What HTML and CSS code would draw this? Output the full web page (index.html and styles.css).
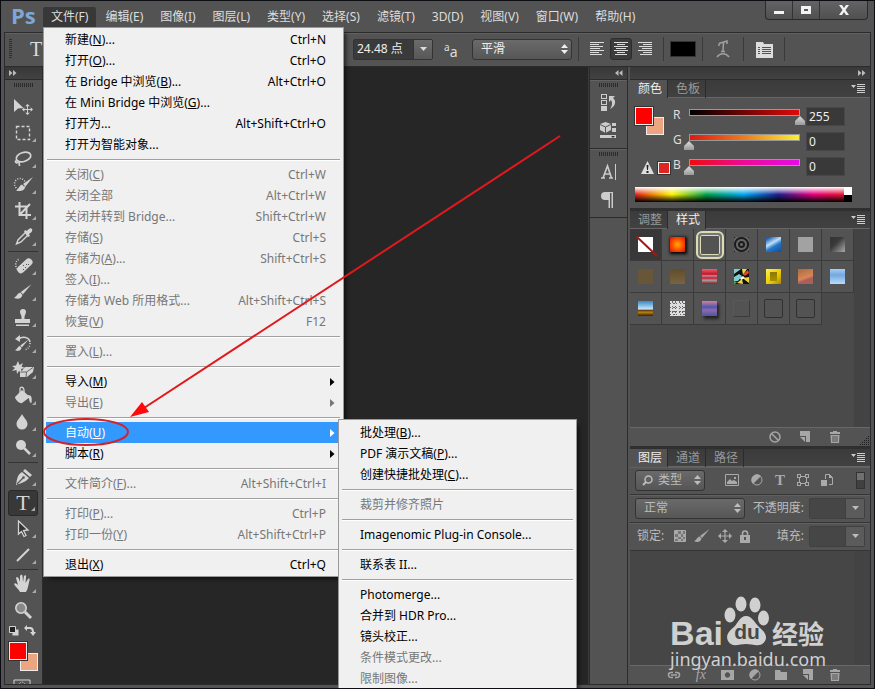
FILE: index.html
```html
<!DOCTYPE html>
<html lang="zh-CN">
<head>
<meta charset="utf-8">
<title>Ps</title>
<link rel="stylesheet" href="styles.css">
</head>
<body>
<svg class="defs" aria-hidden="true">
  <defs>
    <symbol id="i-updown" viewBox="0 0 7 10"><path d="M3.5 0 7 4H0zM3.5 10 7 6H0z"/></symbol>
    <symbol id="i-down" viewBox="0 0 7 4"><path d="M0 0h7L3.5 4z"/></symbol>
    <symbol id="i-right" viewBox="0 0 5 8"><path d="M0 0 4.500 4 0 8z"/></symbol>
    <symbol id="i-menu" viewBox="0 0 14 9"><path d="M0 1h5L2.500 4zM6 0h8v1H6zM6 2h8v1H6zM6 4h8v1H6zM6 6h8v1H6zM6 8h8v1H6z"/></symbol>
    <symbol id="i-expand" viewBox="0 0 8 6"><path d="M0 0 3.500 3 0 6zM4 0l3.500 3L4 6z"/></symbol>
    <symbol id="i-collapse" viewBox="0 0 8 6"><path d="M3.500 0 0 3l3.500 3zM7.500 0 4 3l3.500 3z"/></symbol>
    <symbol id="i-trash" viewBox="0 0 12 12"><path d="M4 0h4v1h3v2H1V1h3zM1.500 4h9L10 12H2zM3.500 5v6h1V5zm2 0v6h1V5zm2 0v6h1V5z" fill-rule="evenodd"/></symbol>
    <symbol id="i-new" viewBox="0 0 12 12"><path d="M1 0h10v11H7V5H1z"/><path d="M1 6h5v5z"/></symbol>
    <symbol id="i-half" viewBox="0 0 12 12"><circle cx="6" cy="6" r="5" fill="none" stroke="currentColor"/><path d="M10 2A5.600 5.600 0 0 0 2 10z"/></symbol>
    <symbol id="i-brush" viewBox="0 0 16 14"><path d="M15.500 0 8 9 6 7zM5.500 7.500 7.500 9.500C7 13 3 14 0 12c2 0 3-4 5.500-4.500z"/></symbol>
    <symbol id="i-cross" viewBox="0 0 14 14"><path d="M7 0l3 3H7.600v3.400H11V4l3 3-3 3V7.600H7.600V11H10l-3 3-3-3h2.400V7.600H3V10L0 7l3-3v2.400h3.400V3H4z"/></symbol>
  </defs>
</svg>

<div class="app">
  <header class="menubar">
    <span class="logo">Ps</span>
    <nav class="menus">
      <button class="open">文件(F)</button><button>编辑(E)</button><button>图像(I)</button><button>图层(L)</button><button>类型(Y)</button><button>选择(S)</button><button>滤镜(T)</button><button>3D(D)</button><button>视图(V)</button><button>窗口(W)</button><button>帮助(H)</button>
    </nav>
  </header>
  <div class="window-buttons">
    <button aria-label="最小化"><svg width="12" height="12"><path d="M1 7h10v3H1z"/></svg></button>
    <button aria-label="最大化"><svg width="12" height="12"><path d="M1 2h10v8H1zM4 5v2h4V5z" fill-rule="evenodd"/></svg></button>
    <button class="close" aria-label="关闭"><svg width="12" height="12"><path d="M1 1h3l2 3 2-3h3L7.500 6 11 11H8L6 8l-2 3H1l3.500-5z"/></svg></button>
  </div>

  <div class="frame">
    <section class="options">
      <i class="grip-v"></i>
      <span class="type-mark">T</span>
      <span class="options-gap"></span>
      <div class="combo size"><input aria-label="字号" value="24.48 点"><button aria-label="字号列表"><svg width="7" height="4"><use href="#i-down"/></svg></button></div>
      <span class="aa"><sup>a</sup>a</span>
      <div class="pick smooth"><select aria-label="消除锯齿"><option>平滑</option></select><svg width="7" height="10"><use href="#i-updown"/></svg></div>
      <i class="bar"></i>
      <div class="align">
        <button aria-label="左对齐"><svg width="16" height="14"><path d="M1 0h14v1H1zM1 2h9v1H1zM1 4h13v1H1zM1 6h10v1H1zM1 8h14v1H1zM1 10h9v1H1zM1 12h12v1H1z"/></svg></button>
        <button class="on" aria-label="居中"><svg width="16" height="14"><path d="M1 0h14v1H1zM4 2h8v1H4zM1 4h14v1H1zM3 6h10v1H3zM1 8h14v1H1zM4 10h8v1H4zM2 12h12v1H2z"/></svg></button>
        <button aria-label="右对齐"><svg width="16" height="14"><path d="M1 0h14v1H1zM6 2h9v1H6zM2 4h13v1H2zM5 6h10v1H5zM1 8h14v1H1zM6 10h9v1H6zM3 12h12v1H3z"/></svg></button>
      </div>
      <i class="bar"></i>
      <button class="text-color" aria-label="文本颜色"></button>
      <i class="bar"></i>
      <button class="plain warp" aria-label="变形"><svg width="16" height="18"><path d="M4 3.500 12 1v3M4 3.500V6M8.500 2.500 8 11M6 11.500h4M2 17c3-4.500 9-4.500 12 0" fill="none" stroke="currentColor" stroke-width="1.500"/></svg></button>
      <i class="bar"></i>
      <button class="plain" aria-label="字符面板"><svg width="17" height="17"><path d="M0 1h7l1 2h9v14H0zM2 6v1h2V6zm4 0v1h9V6zM2 8v1h2V8zm4 0v1h9V8zM2 10v1h2v-1zm4 0v1h9v-1zM2 12v1h2v-1zm4 0v1h9v-1z" fill-rule="evenodd"/></svg></button>
      <i class="bar"></i>
    </section>

    <main class="work">
      <aside class="toolbox">
        <div class="strip left"><svg width="8" height="6"><use href="#i-expand"/></svg></div>
        <i class="grip"></i>
        <div class="tools">
          <button class="no-more" aria-label="移动"><svg viewBox="0 0 30 26"><path d="M6 5v13l4-3.500 5.500-.5z"/><use href="#i-cross" x="14" y="10" width="11" height="11"/></svg></button>
          <button aria-label="选框"><svg viewBox="0 0 30 26"><path d="M8.500 6.500h13v13h-13z" fill="none" stroke="currentColor" stroke-width="1.400" stroke-dasharray="3 2"/></svg></button>
          <button aria-label="套索"><svg viewBox="0 0 30 26"><g fill="none" stroke="currentColor" stroke-width="1.700"><ellipse cx="15.500" cy="11" rx="7.500" ry="4.500" transform="rotate(-18 15.500 11)"/><path d="M9 15c-3-1-1 3 .5 1.500S11 16 11.500 20"/></g></svg></button>
          <button aria-label="快速选择"><svg viewBox="0 0 30 26"><circle cx="12" cy="12" r="5.500" fill="none" stroke="currentColor" stroke-width="1.500" stroke-dasharray="1 1.500"/><path d="M25 5 17.500 14.500 15 12zM14 12.500l3 3c-1 4-6 4-9 3 3-1 3-5 6-6z"/></svg></button>
          <button aria-label="裁剪"><svg viewBox="0 0 30 26"><path d="M11.500 4v13H23M7 8.500h11.500V21M11.500 17 22 6" fill="none" stroke="currentColor" stroke-width="2"/></svg></button>
          <button aria-label="吸管"><svg viewBox="0 0 30 26"><path d="M17 6l2 1c1-2 4-4 5-2s-1 4-3 5l1 2-2 1-4-5z"/><path d="M17 9l-7 7-1.500 4L13 18l7-7" fill="none" stroke="currentColor" stroke-width="1.400"/></svg></button>
          <hr>
          <button aria-label="污点修复"><svg viewBox="0 0 30 26"><path d="M11 18c-5-4-4-11 1-12" fill="none" stroke="currentColor" stroke-dasharray="1 1.500" stroke-width="1.500"/><rect x="8" y="9" width="18" height="7.500" rx="3.500" transform="rotate(-43 17 13)"/><path d="M15 12h1v1h-1zm3-1h1v1h-1zm-1 3h1v1h-1zm-2 2h1v1h-1zm5-5h1v1h-1z" fill="#555"/></svg></button>
          <button aria-label="画笔"><svg viewBox="0 0 30 26"><use href="#i-brush" x="6" y="5" width="18" height="16"/></svg></button>
          <button aria-label="图章"><svg viewBox="0 0 30 26"><path d="M12 7a3 3 0 1 1 6 0c0 2-1.500 3-1.500 5v2H22v4H7v-4h6.500v-2c0-2-1.500-3-1.500-5zM8 19.500h13V21H8z"/></svg></button>
          <button aria-label="历史画笔"><svg viewBox="0 0 30 26"><path d="M10 8c5-3 11-2 12 3" fill="none" stroke="currentColor" stroke-width="1.600"/><path d="M22 12c0 4-2 6-6 7" fill="none" stroke="currentColor" stroke-width="1.500" stroke-dasharray="1 1.500"/><path d="M12 4v7L7 8z"/><use href="#i-brush" x="7" y="8" width="14" height="13"/></svg></button>
          <button aria-label="橡皮擦"><svg viewBox="0 0 30 26"><path d="M10 4l1.500 4L15 6l-1.500 3.500L17 11l-4 1 1 4-3-2-2 3-.5-4L4 14l3-3-3-2 4-.5z"/><path d="M17 10h9l-1 5-6 5h-7v-4z"/><path d="M18.500 15 25 10.500M18.500 15l-.5 5M18.500 15H13" stroke="#666" fill="none"/></svg></button>
          <button aria-label="油漆桶"><svg viewBox="0 0 30 26"><path d="M7 14l7-7 8 7-8 6c-2 1-7-3-7-6z"/><path d="M12 13V6c0-3 4-2 4 1v4" fill="none" stroke="currentColor" stroke-width="1.300"/><path d="M20 12c4 0 4 3 3.500 8-2 0-2-3-3-6z"/></svg></button>
          <button aria-label="模糊"><svg viewBox="0 0 30 26"><path d="M14 5c2 4 5.500 6.500 5.500 10a5.500 5.500 0 0 1-11 0C8.500 11.500 12 9 14 5z"/></svg></button>
          <button aria-label="减淡"><svg viewBox="0 0 30 26"><circle cx="13" cy="10" r="5"/><path d="M16 13l6 6" stroke="currentColor" stroke-width="2.500"/></svg></button>
          <hr>
          <button aria-label="钢笔"><svg viewBox="0 0 30 26"><path d="M17 5l7 6-2 2-7-6zM14 8l7 6c-3 4-8 5-13 7 1-5 1-10 6-13z"/><path d="M9 20l6-6" stroke="#555" stroke-width="1.200"/><circle cx="15.500" cy="13.500" r="1.300" fill="#555"/></svg></button>
          <button class="on letter" aria-label="文字">T</button>
          <button aria-label="路径选择"><svg viewBox="0 0 30 26"><path d="M10.500 5v13l3-2.500 2.500 5 2-1-2.500-5 4.500-.5z" fill="#333" stroke="currentColor" stroke-width="1.300"/></svg></button>
          <button aria-label="直线"><svg viewBox="0 0 30 26"><path d="M9 19 21 7" stroke="currentColor" stroke-width="2"/></svg></button>
          <hr>
          <button aria-label="抓手"><svg viewBox="0 0 30 26"><path d="M12 21c-1-3-5-5-6-8 1-2 3 0 4 1L8 7c1-2 2-1 3 1l1 3V5c1-2 2.500-1 2.500 0l.5 6 1-6c1-1 2.500-1 2 1l-.5 6 2.500-4c1-1 2-.5 1.500 1-1 4-1.500 9-3.500 12z"/></svg></button>
          <button class="no-more" aria-label="缩放"><svg viewBox="0 0 30 26"><circle cx="13" cy="11" r="5.200" fill="#888" stroke="currentColor" stroke-width="1.600"/><path d="M17 15l6 6" stroke="currentColor" stroke-width="3"/></svg></button>
        </div>
        <div class="mini">
          <svg width="12" height="12"><path d="M4.500 4.500h6v6h-6z"/><path d="M1.500 1.500h6v6h-6z" fill="#222" stroke="currentColor"/></svg>
          <svg width="12" height="12"><path d="M3 0v2h3c2 0 4 1 4 5h2l-3 4-3-4h2c0-2-1-3-2-3H3v2L0 3z"/></svg>
        </div>
        <div class="swatches big"><button class="back" aria-label="背景色"></button><button class="fore" aria-label="前景色"></button></div>
        <div class="mask"><svg width="18" height="12"><path d="M1 1h16v10H1z" fill="none" stroke="currentColor"/><circle cx="9" cy="6" r="3" fill="none" stroke="currentColor" stroke-dasharray="1 1"/></svg></div>
      </aside>

      <section class="canvas"></section>

      <aside class="dock">
        <div class="strip right"><svg width="8" height="6"><use href="#i-collapse"/></svg></div>
        <div class="dock-group">
          <i class="grip"></i>
          <button aria-label="历史记录"><svg width="18" height="18"><path d="M1 0h6v5H1zM2 1v3h4V1zM1 6h6v5H1zM2 7v3h4V7zM1 12h6v5H1z" fill-rule="evenodd"/><path d="M9 2h6l-2 2c4 3 2 9-3 11 2-3 3-6 1-9L9 8z"/></svg></button>
          <button aria-label="属性"><svg width="18" height="18"><path d="M5.500 0 11 2v6l-5.500 3L0 8V2z"/><path d="M0 2.500 5.500 5 11 2.500M5.500 5v6" fill="none" stroke="#555"/><path d="M12 1h4v3h-4zM12 6h4v4h-4zM0 13h16v3H0z"/><path d="M11 14h4l-2 2z" fill="#333"/></svg></button>
        </div>
        <div class="dock-group">
          <i class="grip"></i>
          <button aria-label="字符"><svg width="18" height="18"><path d="M15.500 1v16" stroke="currentColor"/><path d="M1 15h4M9 15h4M3 15 7.500 3l4 12M5 11h5" fill="none" stroke="currentColor" stroke-width="1.600"/></svg></button>
          <button aria-label="段落"><svg width="18" height="18"><path d="M5 1h8v16h-1.500V2H10v15H8.500V9H5a4 4 0 0 1 0-8z"/></svg></button>
        </div>
      </aside>

      <aside class="panels">
        <div class="strip right"><svg width="8" height="6"><use href="#i-expand"/></svg></div>

        <section class="panel">
          <div class="tabs"><button class="on">颜色</button><button>色板</button><svg width="14" height="9"><use href="#i-menu"/></svg></div>
          <div class="color-body">
            <div class="color-left">
              <div class="swatches"><button class="back" aria-label="背景色"></button><button class="fore" aria-label="前景色"></button></div>
              <div class="warn"><svg width="13" height="13"><path d="M6.500 0 13 13H0z"/><path d="M5.500 4h2l-.5 5H6zM5.500 10h2v2h-2z" fill="#222"/></svg><i></i></div>
            </div>
            <div class="channels">
              <label for="r">R</label><input id="r" class="red" type="range" min="0" max="255" value="255"><input aria-label="R 值" value="255">
              <label for="g">G</label><input id="g" class="green" type="range" min="0" max="255" value="0"><input aria-label="G 值" value="0">
              <label for="b">B</label><input id="b" class="blue" type="range" min="0" max="255" value="0"><input aria-label="B 值" value="0">
            </div>
          </div>
          <div class="ramp"><i></i><b></b></div>
        </section>

        <section class="panel styles-panel">
          <div class="tabs"><button>调整</button><button class="on">样式</button><svg width="14" height="9"><use href="#i-menu"/></svg></div>
          <div class="scroll">
            <div class="presets">
              <i class="none"><svg width="32" height="32"><path d="M6 7 27 27" stroke="#a01818" stroke-width="2"/></svg></i><i class="p-fire"></i><i class="p-ring"></i><i class="p-dark"></i><i class="p-sky"></i><i class="p-gray"></i><i class="p-fade"></i>
              <i class="p-brown"></i><i class="p-umber"></i><i class="p-plaid"></i><i class="art"><svg width="15" height="15"><path d="M0 0h15v15H0z" fill="#111"/><path d="M0 0h7L0 5zM0 8l5-3 3 2-4 5H0z" fill="#7cd0d4"/><path d="M8 0h5L9 6zM9 9l6-1v6l-4-3zM3 14l5-4 1 5z" fill="#ecd840"/><path d="M9 5l5-4 1 3-4 3z" fill="#e04828"/><path d="M6 9l3-2 2 2-4 2z" fill="#fff"/><path d="M0 12l3 1-2 2H0z" fill="#58a030"/></svg></i><i class="p-gold"></i><i class="p-rust"></i><i class="p-ice"></i>
              <i class="p-land"></i><i class="art"><svg width="15" height="15"><path d="M0 0h15v15H0z" fill="#ddd"/><g fill="none" stroke="#666"><path d="M0 2.500h15M0 6.500h15M0 10.500h15M0 13.500h15" stroke-dasharray="1 2 2 1 1 3"/><path d="M2.500 0v15M5.500 0v15M9.500 0v15M12.500 0v15" stroke-dasharray="2 3 1 1 1 2"/></g></svg></i><i class="p-violet"></i><i class="p-soft"></i><i class="p-line"></i><i class="p-line"></i>
            </div>
          </div>
          <div class="foot styles-foot">
            <svg width="12" height="12"><circle cx="6" cy="6" r="5" fill="none" stroke="currentColor" stroke-width="1.500"/><path d="M2.500 2.500l7 7" stroke="currentColor" stroke-width="1.500"/></svg>
            <svg width="12" height="12"><use href="#i-new"/></svg>
            <svg width="12" height="12"><use href="#i-trash"/></svg>
            <svg class="corner" width="10" height="10"><path d="M9.500 10V0M7.500 10V2M5.500 10V4M3.500 10V6M1.500 10V8" stroke="#1c1c1c" stroke-dasharray="1 1"/></svg>
          </div>
        </section>

        <section class="panel layers">
          <div class="tabs"><button class="on">图层</button><button>通道</button><button>路径</button><svg width="14" height="9"><use href="#i-menu"/></svg></div>
          <div class="row">
            <div class="pick kind"><svg class="lens" width="11" height="11"><circle cx="6.500" cy="4.500" r="3.500" fill="none" stroke="currentColor" stroke-width="1.500"/><path d="M4 7 1 10" stroke="currentColor" stroke-width="2"/></svg><select aria-label="类型"><option>类型</option></select><svg width="7" height="10"><use href="#i-updown"/></svg></div>
            <div class="filters">
              <svg width="14" height="12"><path d="M.5.5h13v11H.5z" fill="none" stroke="currentColor"/><path d="M2 10V8l3-3 2 2 2-1 3 2v2zM9 3h2v2H9z"/></svg>
              <svg width="12" height="12"><use href="#i-half"/></svg>
              <span>T</span>
              <svg width="12" height="12"><path d="M2.500 2.500h7v7h-7z" fill="none" stroke="currentColor"/><path d="M0 0h4v4H0zM8 0h4v4H8zM0 8h4v4H0zM8 8h4v4H8z"/><path d="M1 1h2v2H1zM9 1h2v2H9zM1 9h2v2H1zM9 9h2v2H9z" fill="#535353"/></svg>
              <svg width="12" height="13"><path d="M4.500 5V.5h4l3 3v7H8" fill="none" stroke="currentColor"/><path d="M0 6h6v6H0zM8 0v4h4z"/></svg>
            </div>
            <i class="toggle"></i>
          </div>
          <div class="row">
            <div class="pick mode"><select aria-label="混合模式"><option>正常</option></select><svg width="7" height="10"><use href="#i-updown"/></svg></div>
            <label for="opacity">不透明度:</label>
            <div class="combo dim"><input id="opacity"><button aria-label="不透明度滑块"><svg width="7" height="4"><use href="#i-down"/></svg></button></div>
          </div>
          <div class="row">
            <span class="lock-label">锁定:</span>
            <div class="locks">
              <svg width="12" height="12"><path d="M.5.5h11v11H.5z" fill="#777" stroke="currentColor"/><path d="M1 1h3v3H1zM7 1h2v3H7zM4 4h3v3H4zM9 4h2v3H9zM1 7h3v2H1zM7 7h2v2H7zM4 9h3v2H4zM9 9h2v2H9z"/></svg>
              <svg width="16" height="14"><use href="#i-brush"/></svg>
              <svg width="14" height="14"><use href="#i-cross"/></svg>
              <svg width="10" height="13"><path d="M2.500 6V3.500a2.500 2.500 0 0 1 5 0V6" fill="none" stroke="currentColor" stroke-width="1.600"/><path d="M0 5h10v8H0zM4 7v3h2V7z" fill-rule="evenodd"/></svg>
            </div>
            <label for="fill">填充:</label>
            <div class="combo dim"><input id="fill"><button aria-label="填充滑块"><svg width="7" height="4"><use href="#i-down"/></svg></button></div>
          </div>
          <div class="scroll"></div>
          <div class="foot layers-foot">
            <svg width="14" height="8"><path d="M6 1.500H4a2.500 2.500 0 0 0 0 5h2M8 1.500h2a2.500 2.500 0 0 1 0 5H8M4 4h6" fill="none" stroke="currentColor" stroke-width="1.600"/></svg>
            <em>fx</em>
            <svg width="13" height="10"><path d="M0 0h13v10H0zM6.500 2.300a2.700 2.700 0 1 0 .01 0z" fill-rule="evenodd"/></svg>
            <svg width="12" height="12"><use href="#i-half"/></svg>
            <svg width="12" height="10"><path d="M0 0h5l1 2h6v8H0z"/></svg>
            <svg width="12" height="12"><use href="#i-new"/></svg>
            <svg width="12" height="12"><use href="#i-trash"/></svg>
          </div>
        </section>
      </aside>
    </main>
  </div>

  <div class="menu file-menu">
    <button><span>新建(<u>N</u>)...</span><kbd>Ctrl+N</kbd></button>
    <button><span>打开(<u>O</u>)...</span><kbd>Ctrl+O</kbd></button>
    <button><span>在 Bridge 中浏览(<u>B</u>)...</span><kbd>Alt+Ctrl+O</kbd></button>
    <button><span>在 Mini Bridge 中浏览(<u>G</u>)...</span></button>
    <button><span>打开为...</span><kbd>Alt+Shift+Ctrl+O</kbd></button>
    <button><span>打开为智能对象...</span></button>
    <hr>
    <button disabled><span>关闭(<u>C</u>)</span><kbd>Ctrl+W</kbd></button>
    <button disabled><span>关闭全部</span><kbd>Alt+Ctrl+W</kbd></button>
    <button disabled><span>关闭并转到 Bridge...</span><kbd>Shift+Ctrl+W</kbd></button>
    <button disabled><span>存储(<u>S</u>)</span><kbd>Ctrl+S</kbd></button>
    <button disabled><span>存储为(<u>A</u>)...</span><kbd>Shift+Ctrl+S</kbd></button>
    <button disabled><span>签入(<u>I</u>)...</span></button>
    <button disabled><span>存储为 Web 所用格式...</span><kbd>Alt+Shift+Ctrl+S</kbd></button>
    <button disabled><span>恢复(<u>V</u>)</span><kbd>F12</kbd></button>
    <hr>
    <button disabled><span>置入(<u>L</u>)...</span></button>
    <hr>
    <button class="more"><span>导入(<u>M</u>)</span><svg width="5" height="8"><use href="#i-right"/></svg></button>
    <button class="more" disabled><span>导出(<u>E</u>)</span><svg width="5" height="8"><use href="#i-right"/></svg></button>
    <hr>
    <button class="more active"><span>自动(<u>U</u>)</span><svg width="5" height="8"><use href="#i-right"/></svg></button>
    <button class="more"><span>脚本(<u>R</u>)</span><svg width="5" height="8"><use href="#i-right"/></svg></button>
    <hr>
    <button disabled><span>文件简介(<u>F</u>)...</span><kbd>Alt+Shift+Ctrl+I</kbd></button>
    <hr>
    <button disabled><span>打印(<u>P</u>)...</span><kbd>Ctrl+P</kbd></button>
    <button disabled><span>打印一份(<u>Y</u>)</span><kbd>Alt+Shift+Ctrl+P</kbd></button>
    <hr>
    <button><span>退出(<u>X</u>)</span><kbd>Ctrl+Q</kbd></button>
  </div>

  <div class="menu auto-menu">
    <button><span>批处理(<u>B</u>)...</span></button>
    <button><span>PDF 演示文稿(<u>P</u>)...</span></button>
    <button><span>创建快捷批处理(<u>C</u>)...</span></button>
    <hr>
    <button disabled><span>裁剪并修齐照片</span></button>
    <hr>
    <button><span>Imagenomic Plug-in Console...</span></button>
    <hr>
    <button><span>联系表 II...</span></button>
    <hr>
    <button><span>Photomerge...</span></button>
    <button><span>合并到 HDR Pro...</span></button>
    <button><span>镜头校正...</span></button>
    <button disabled><span>条件模式更改...</span></button>
    <button disabled><span>限制图像...</span></button>
  </div>

  <svg class="note" width="520" height="320"><g transform="translate(-42 -130)"><path d="M560 136 144 408" stroke="#e0191c" stroke-width="2"/><path d="M130 417 142 402 149 412z" fill="#ff0a0a"/><ellipse cx="86" cy="432" rx="42" ry="13" fill="none" stroke="#d2232a" stroke-width="2"/></g></svg>

  <div class="watermark">
    <div class="brand"><span class="bai">Bai</span>
      <span class="paw"><svg width="46" height="50"><ellipse cx="6" cy="19" rx="5.500" ry="7.500"/><ellipse cx="17" cy="8" rx="5.500" ry="7.500"/><ellipse cx="31" cy="9" rx="5.500" ry="7.500"/><ellipse cx="39.500" cy="22" rx="5.500" ry="7.500"/><path d="M22 20c6 0 8 6 13 11 5 4 9 9 6 14-4 7-12 3-19 3S8 52 4 45c-3-6 2-11 6-14 4-4 6-11 12-11z"/></svg><b>du</b></span>
      <span class="jy">经验</span>
    </div>
    <div class="site">jingyan.baidu.com</div>
  </div>
</div>
</body>
</html>
```

FILE: styles.css
```css
* { box-sizing: border-box; }
html, body { height: 100%; }
body { margin: 0; overflow: hidden; background: #535353; color: #ddd; font: 12px/16px "Noto Sans", "Noto Sans CJK SC", sans-serif; }
button, input, select { font: inherit; color: inherit; margin: 0; padding: 0; border: 0; background: none; border-radius: 0; min-width: 0; }
svg { display: block; fill: currentColor; flex: none; }
i { display: block; font-style: normal; }
.defs { position: absolute; width: 0; height: 0; }

.app { position: relative; height: 100%; display: flex; flex-direction: column; border: 1px solid #0b0d12; background: #535353; overflow: hidden; }
.menubar { display: flex; flex: none; height: 31px; align-items: flex-start; }
.logo { width: 42px; padding-left: 10px; font: bold 22px/28px "Open Sans", sans-serif; color: #7ea6d6; }
.menus { display: flex; gap: 1px; padding-top: 6px; }
.menus button { height: 20px; padding: 0 8px; white-space: nowrap; }
.menus .open { background: #383838; border-radius: 2px 2px 0 0; }
.window-buttons { position: absolute; top: 0; right: 6px; display: flex; border: 1px solid #2a2a2a; border-top: 0; border-radius: 0 0 4px 4px; background: linear-gradient(#636363, #505050); color: #f2f2f2; }
.window-buttons button { width: 27px; height: 18px; display: grid; place-items: center; border-right: 1px solid #333; }
.window-buttons .close { width: 47px; border: 0; }

.frame { flex: 1; min-height: 0; display: flex; flex-direction: column; margin: 0 3px 3px; border: 1px solid #2b2b2b; }
.options { display: flex; flex: none; align-items: center; height: 34px; padding: 0 0 2px 4px; border-top: 1px solid #616161; border-bottom: 1px solid #2b2b2b; }
.grip-v { width: 3px; height: 20px; background: repeating-linear-gradient(#2f2f2f 0 1px, #535353 1px 2px); }
.type-mark { width: 30px; padding-left: 18px; font: 20px/24px "Liberation Serif", serif; }
.options-gap { width: 311px; flex: none; }
.options .bar { flex: none; width: 1px; height: 24px; background: #3a3a3a; }
.combo { display: flex; height: 21px; border: 1px solid #333; border-radius: 2px; }
.combo input { flex: 1; padding: 0 3px; background: #3a3a3a; color: #eee; }
.combo button { width: 19px; display: grid; place-items: center; background: linear-gradient(#6b6b6b, #585858); border-left: 1px solid #333; }
.size { width: 80px; flex: none; }
.aa { width: 39px; padding-left: 11px; flex: none; white-space: nowrap; font-size: 14px; }
.aa sup { font-size: 10px; }
.pick { position: relative; height: 21px; }
.pick select { appearance: none; width: 100%; height: 100%; padding: 0 8px; border: 1px solid #333; border-radius: 3px; background: linear-gradient(#6a6a6a, #565656); }
.pick svg { position: absolute; right: 4px; top: 5px; pointer-events: none; }
.smooth { width: 100px; flex: none; margin-right: 6px; color: #eee; }
.align { display: flex; flex: none; gap: 2px; padding: 0 7px; }
.align button { width: 22px; height: 22px; display: grid; place-items: center; }
.align .on { background: #3c3c3c; border: 1px solid #2d2d2d; border-radius: 3px; }
.text-color { width: 26px; height: 16px; flex: none; margin: 0 6px; background: #000; border: 1px solid #333; }
.plain { width: 40px; flex: none; display: grid; place-items: center; }
.warp { color: #a0a0a0; }

.work { flex: 1; min-height: 0; display: grid; grid-template-columns: 38px minmax(0, 1fr) 39px 242px; }
.strip { height: 13px; flex: none; display: flex; align-items: center; padding: 0 4px; background: linear-gradient(#383838, #424242); border-bottom: 1px solid #2b2b2b; color: #bbb; }
.strip.right { justify-content: flex-end; }
.grip { width: 20px; height: 4px; margin: 3px auto 0; flex: none; background: repeating-linear-gradient(90deg, #2b2b2b 0 1px, #535353 1px 2px); }
.canvas { background: #262626; border-right: 1px solid #3a3a3a; }

.toolbox { display: flex; flex-direction: column; min-height: 0; overflow: hidden; border-right: 1px solid #2b2b2b; color: #d4d4d4; }
.tools { display: flex; flex-direction: column; padding: 7px 3px 0; }
.tools button { position: relative; width: 30px; height: 26px; flex: none; }
.tools button::after { content: ""; position: absolute; right: 2px; bottom: 4px; border-left: 4px solid transparent; border-bottom: 4px solid #aaa; }
.tools .no-more::after { display: none; }
.tools .on { background: #383838; border: 1px solid #2a2a2a; border-radius: 3px; }
.tools .letter { font: 22px/22px "Liberation Serif", serif; }
.tools hr { width: 30px; height: 1px; margin: 1px 0; border: 0; background: #333; flex: none; }
.mini { display: flex; justify-content: space-between; padding: 2px 6px 5px 3px; }
.swatches { position: relative; width: 30px; height: 28px; flex: none; }
.swatches button { position: absolute; width: 18px; height: 18px; border: 1px solid #eee; }
.swatches .fore { left: 0; top: 0; background: #f00; outline: 1px solid #333; }
.swatches .back { right: 1px; bottom: 0; background: #eba580; }
.big { margin-left: 4px; height: 29px; }
.mask { margin: 8px 0 0 8px; }

.dock { display: flex; flex-direction: column; color: #ccc; border-right: 1px solid #2b2b2b; border-left: 1px solid #2b2b2b; }
.dock-group { display: flex; flex-direction: column; align-items: center; border-bottom: 1px solid #2b2b2b; border-top: 1px solid #626262; padding-bottom: 3px; }
.dock-group .grip { margin: 2px auto; }
.dock-group button { height: 28px; display: grid; place-items: center; }

.panels { display: flex; flex-direction: column; min-height: 0; padding-left: 2px; }
.panel { display: flex; flex-direction: column; flex: none; }
.tabs { display: flex; height: 18px; flex: none; background: linear-gradient(#3b3b3b, #414141); border-bottom: 1px solid #666; color: #999; }
.tabs button { height: 18px; padding: 0 5px 0 8px; border-right: 1px solid #2b2b2b; }
.tabs .on { background: #535353; color: #eee; }
.tabs svg { margin: 4px 5px 0 auto; color: #ccc; }
.color-body { display: flex; padding: 9px 25px 0 5px; }
.color-left { width: 38px; flex: none; }
.warn { display: flex; gap: 4px; align-items: center; margin: 26px 0 0 6px; }
.warn i { width: 12px; height: 12px; background: #e0241f; border: 1px solid #eee; outline: 1px solid #333; }
.channels { flex: 1; min-width: 0; display: grid; grid-template-columns: 11px minmax(0, 1fr) 39px; grid-auto-rows: 25px; align-items: start; }
.channels label { line-height: 16px; }
.channels input { width: 100%; height: 19px; padding: 0 2px; background: #393939; border: 1px solid #474747; color: #eee; }
.channels input[type="range"] { appearance: none; height: 18px; padding: 0; margin-top: 2px; border: 0; width: 121px; background: none; }
.channels .red { --ramp: linear-gradient(90deg, #000, #e00a0a); }
.channels .green { --ramp: linear-gradient(90deg, #dc1a12, #f07b1e, #f5f23a); }
.channels .blue { --ramp: linear-gradient(90deg, #ee0c0c, #f0089a, #e60ce6); }
.channels input[type="range"]::-webkit-slider-runnable-track { height: 18px; background: var(--ramp) 6px 1px / calc(100% - 12px) 5px no-repeat, linear-gradient(#999, #999) 5px 0 / calc(100% - 10px) 7px no-repeat; }
.channels input[type="range"]::-webkit-slider-thumb { appearance: none; width: 10px; height: 9px; margin-top: 7px; background: linear-gradient(#ddd, #999); clip-path: polygon(50% 0, 100% 55%, 100% 100%, 0 100%, 0 55%); }
.ramp { height: 15px; margin: 5px 18px 6px 5px; display: grid; grid-template: 1fr 1fr / 1fr 8px; background: linear-gradient(#fff, transparent 50%, #000), linear-gradient(90deg, #e0201c, #fff200 17%, #00a04a 33%, #00a8f0 50%, #20208c 66%, #e6007e 82%, #e0201c); }
.ramp i { grid-column: 2; background: #fff; }
.ramp b { grid-column: 2; background: #000; }
.panel + .panel { border-top: 3px solid #2f2f2f; }
.scroll { position: relative; background: #4a4a4a; padding-right: 17px; }
.scroll::after { content: ""; position: absolute; top: 0; right: 0; bottom: 0; width: 16px; background: #434343; }
.styles-panel .scroll { height: 198px; }
.presets { display: grid; grid-template-columns: repeat(7, 32px); grid-auto-rows: 32px; width: 224px; }
.presets i { position: relative; display: grid; place-items: center; background: #535353; border-right: 1px solid #3b3b3b; border-bottom: 1px solid #3b3b3b; }
.presets i::before { content: ""; width: 15px; height: 15px; background: var(--fill, transparent); }
.presets .art::before { display: none; }
.presets .none { background: #383838; --fill: #fff; }
.none svg { position: absolute; left: 0; top: 0; }
.presets .p-fire { --fill: radial-gradient(#ffb000, #ff5000 50%, #d81000); }
.presets .p-fire::before { box-shadow: 1px 1px 3px 1px #000; }
.presets .p-ring::before { width: 20px; height: 20px; border: 2px solid #777; border-radius: 4px; outline: 2px solid #dcdcb4; box-shadow: inset 0 0 0 1px #dcdcb4; }
.presets .p-dark { --fill: repeating-radial-gradient(#666 0 1px, #1c1c1c 2px 3px, #666 4px); }
.presets .p-sky { --fill: linear-gradient(150deg, #1a60b8 10%, #bfe0f8 40%, #2478cc 60%, #164c94); }
.presets .p-gray { --fill: #a2a2a2; }
.presets .p-fade { --fill: linear-gradient(135deg, #333, #3a3a3a 40%, #aaa); }
.presets .p-brown { --fill: #675738; }
.presets .p-umber { --fill: linear-gradient(#604e28, #786344); }
.presets .p-plaid { --fill: linear-gradient(#f65c6a, #c01428 35%, #b89098 45%, #d01830 60%, #a0a0a0 75%, #a01020); }
.presets .p-gold { --fill: linear-gradient(#8c7800, #a89000) center / 7px 9px no-repeat, linear-gradient(135deg, #fff04a, #e8c800 60%, #a88800); }
.presets .p-rust { --fill: linear-gradient(160deg, #a86848, #d88850 55%, #b05868 70%, #987040); }
.presets .p-ice { --fill: linear-gradient(#a8ccf4, #74a8e0 40%, #b8dcfc); }
.presets .p-land { --fill: linear-gradient(#3888c8, #c8e8f8 55%, #503410 60%, #b88018 75%, #382000); }
.presets .p-violet { --fill: linear-gradient(#d080a8, #5058a8 40%, #9068b0 60%, #4858a0); }
.presets .p-violet::before { box-shadow: 2px 3px 3px #222; }
.presets .p-soft::before { border: 1px solid; border-color: #595959 #3b3b3b #3b3b3b #595959; }
.presets .p-line::before { width: 17px; height: 17px; border: 1px solid #303030; border-radius: 2px; }
.foot { display: flex; flex: none; align-items: center; height: 19px; border-top: 1px solid #686868; color: #a6a6a6; }
.styles-foot { justify-content: flex-end; gap: 18px; }
.foot .corner { margin: 6px 1px 0 0; }

.layers { flex: 1; min-height: 0; color: #bcbcbc; }
.layers .row { display: flex; flex: none; align-items: center; height: 28px; padding: 0 5px 2px; border-bottom: 1px solid #353535; border-top: 1px solid #606060; }
.kind { width: 70px; }
.kind select { padding-left: 22px; }
.pick .lens { left: 7px; right: auto; }
.filters { display: flex; flex: 1; justify-content: space-between; align-items: center; padding: 0 23px 0 20px; color: #aaa; }
.filters span { font: bold 15px/16px "Liberation Serif", serif; }
.toggle { width: 9px; height: 17px; border: 1px solid #333; background: linear-gradient(#707070 0 7px, #404040 7px); }
.mode { width: 110px; margin-right: auto; }
.layers label { margin-right: 5px; }
.layers .combo { width: 56px; border-color: #404040; }
.layers .combo input { background: #464646; }
.layers .combo button { background: #5b5b5b; border-color: #404040; }
.lock-label { margin-left: 2px; }
.locks { display: flex; flex: 1; align-items: center; gap: 8px; padding-left: 10px; color: #aaa; }
.layers .scroll { flex: 1; background: #464646; }
.layers-foot { justify-content: space-between; padding: 0 29px 0 37px; }
.foot em { font: italic 14px/16px "Liberation Serif", serif; }

.menu { position: absolute; padding: 1px 2px; background: #f0f0f0; border: 1px solid #999; color: #000; box-shadow: 4px 4px 4px -2px #0009; }
.menu button { width: 100%; height: 21px; display: flex; align-items: center; justify-content: space-between; padding: 0 15px 0 19px; white-space: nowrap; text-align: left; }
.menu button:disabled { color: #777; }
.menu .more { padding-right: 6px; }
.menu .active { background: #3399ff; color: #fff; }
.menu kbd { font: inherit; }
.menu u { text-underline-offset: 1px; }
.menu hr { height: 2px; margin: 4px 1px 3px; border: 0; border-top: 1px solid #a0a0a0; border-bottom: 1px solid #fff; }
.file-menu { left: 42px; top: 26px; width: 301px; }
.auto-menu { left: 337px; top: 418px; width: 239px; padding-top: 2px; padding-bottom: 20px; }
.note { position: absolute; left: 41px; top: 129px; pointer-events: none; }

.watermark { position: absolute; right: 48px; bottom: 19px; color: #d0d0d0; pointer-events: none; }
.brand { display: flex; align-items: flex-end; height: 50px; }
.bai { font: bold 34px/26px "Liberation Sans", sans-serif; }
.paw { position: relative; margin-left: 1px; }
.paw b { position: absolute; left: 0; right: 0; bottom: 3px; text-align: center; font: bold 21px/22px "Liberation Sans", sans-serif; color: #484848; }
.jy { margin-left: 2px; font: bold 26px/26px "Noto Sans CJK SC", sans-serif; }
.site { margin-top: 3px; font-size: 18px; line-height: 20px; }
```
